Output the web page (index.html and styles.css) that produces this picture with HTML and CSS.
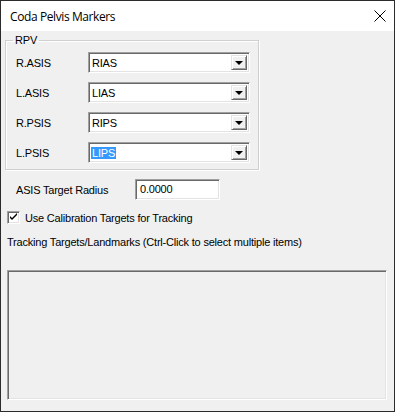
FILE: index.html
```html
<!DOCTYPE html>
<html lang="en">
<head>
  <meta charset="UTF-8">
  <title>Coda Pelvis Markers</title>
  <link rel="stylesheet" href="styles.css">
</head>
<body>
  <div class="window">
    <div class="titlebar">
      <span class="title">Coda Pelvis Markers</span>
      <svg class="close" width="12" height="12" viewBox="0 0 12 12">
        <path d="M0.5 0.5 L11.5 11.5 M11.5 0.5 L0.5 11.5" stroke="#000" stroke-width="1" fill="none"/>
      </svg>
    </div>

    <div class="content">
      <fieldset class="group">
        <legend>RPV</legend>
        <div class="row">
          <label>R.ASIS</label>
          <div class="combo"><span class="value">RIAS</span><span class="drop"><i></i></span></div>
        </div>
        <div class="row">
          <label>L.ASIS</label>
          <div class="combo"><span class="value">LIAS</span><span class="drop"><i></i></span></div>
        </div>
        <div class="row">
          <label>R.PSIS</label>
          <div class="combo"><span class="value">RIPS</span><span class="drop"><i></i></span></div>
        </div>
        <div class="row">
          <label>L.PSIS</label>
          <div class="combo"><span class="value selected">LIPS</span><span class="drop"><i></i></span></div>
        </div>
      </fieldset>

      <div class="radius-row">
        <label>ASIS Target Radius</label>
        <div class="textbox">0.0000</div>
      </div>

      <div class="check-row">
        <span class="checkbox">
          <svg width="9" height="9" viewBox="0 0 9 9">
            <path d="M1 3 L3 5 L8 0 L8 2 L3 7 L1 5 Z" fill="#000"/>
          </svg>
        </span>
        <span>Use Calibration Targets for Tracking</span>
      </div>

      <p class="hint">Tracking Targets/Landmarks (Ctrl-Click to select multiple items)</p>

      <div class="listbox"></div>
    </div>
  </div>
</body>
</html>
```

FILE: styles.css
```css
body {
  margin: 0;
  font-family: 'Liberation Sans', Arial, sans-serif;
  font-size: 11px;
  letter-spacing: -0.2px;
  color: #000;
}
.window {
  width: 395px;
  height: 412px;
  box-sizing: border-box;
  border: 1px solid #2b2b2b;
  background: #f0f0f0;
}
.titlebar {
  height: 30px;
  background: #fff;
  display: flex;
  align-items: center;
  justify-content: space-between;
  padding: 0 8px 0 9px;
}
.title {
  font-family: 'Open Sans', 'Noto Sans', sans-serif;
  font-size: 12px;
  letter-spacing: -0.4px;
}
.content {
  padding: 3px 0 0 4px;
}
.group {
  width: 254px;
  box-sizing: border-box;
  margin: 0;
  padding: 5px 7px 6px 10px;
  border: 1px solid #cfcfcf;
  box-shadow: inset 1px 1px 0 #fff, 1px 1px 0 #fff;
}
.group legend {
  padding: 0 2px;
  margin-left: -3px;
  line-height: 13px;
}
.row {
  display: flex;
  align-items: center;
  height: 21px;
  margin-bottom: 9px;
}
.row:last-child {
  margin-bottom: 0;
}
.row label {
  width: 72px;
}
.combo {
  width: 162px;
  height: 21px;
  box-sizing: border-box;
  background: #fff;
  border-style: solid;
  border-width: 1px;
  border-color: #a0a0a0 #fff #fff #a0a0a0;
  box-shadow: inset 1px 1px 0 #696969, inset -1px -1px 0 #e3e3e3;
  display: flex;
  align-items: center;
  padding: 2px;
}
.value {
  flex: 1;
  padding-left: 1px;
}
.value.selected {
  flex: none;
  background: #3399ff;
  color: #fff;
  padding: 0 1px;
  margin-right: auto;
}
.drop {
  width: 16px;
  height: 15px;
  box-sizing: border-box;
  background: #f0f0f0;
  border-style: solid;
  border-width: 1px;
  border-color: #e3e3e3 #696969 #696969 #e3e3e3;
  box-shadow: inset 1px 1px 0 #fff, inset -1px -1px 0 #a0a0a0;
  display: flex;
  align-items: center;
  justify-content: center;
}
.drop i {
  width: 0;
  height: 0;
  border-left: 4px solid transparent;
  border-right: 4px solid transparent;
  border-top: 4px solid #000;
  margin-top: 1px;
}
.radius-row {
  display: flex;
  align-items: center;
  margin: 9px 0 0 11px;
}
.radius-row label {
  width: 119px;
}
.textbox {
  width: 85px;
  height: 21px;
  box-sizing: border-box;
  background: #fff;
  border-style: solid;
  border-width: 1px;
  border-color: #a0a0a0 #fff #fff #a0a0a0;
  box-shadow: inset 1px 1px 0 #696969, inset -1px -1px 0 #e3e3e3;
  padding: 3px 4px;
}
.check-row {
  display: flex;
  align-items: center;
  margin: 11px 0 0 2px;
}
.checkbox {
  width: 13px;
  height: 13px;
  box-sizing: border-box;
  background: #fff;
  border-style: solid;
  border-width: 1px;
  border-color: #a0a0a0 #fff #fff #a0a0a0;
  box-shadow: inset 1px 1px 0 #696969, inset -1px -1px 0 #e3e3e3;
  display: flex;
  align-items: center;
  justify-content: center;
  margin-right: 5px;
}
.hint {
  margin: 12px 0 0 2px;
}
.listbox {
  width: 380px;
  height: 130px;
  box-sizing: border-box;
  margin: 22px 0 0 2px;
  border-style: solid;
  border-width: 1px;
  border-color: #a0a0a0 #fff #fff #a0a0a0;
  box-shadow: inset 1px 1px 0 #696969, inset -1px -1px 0 #e3e3e3;
}
```
